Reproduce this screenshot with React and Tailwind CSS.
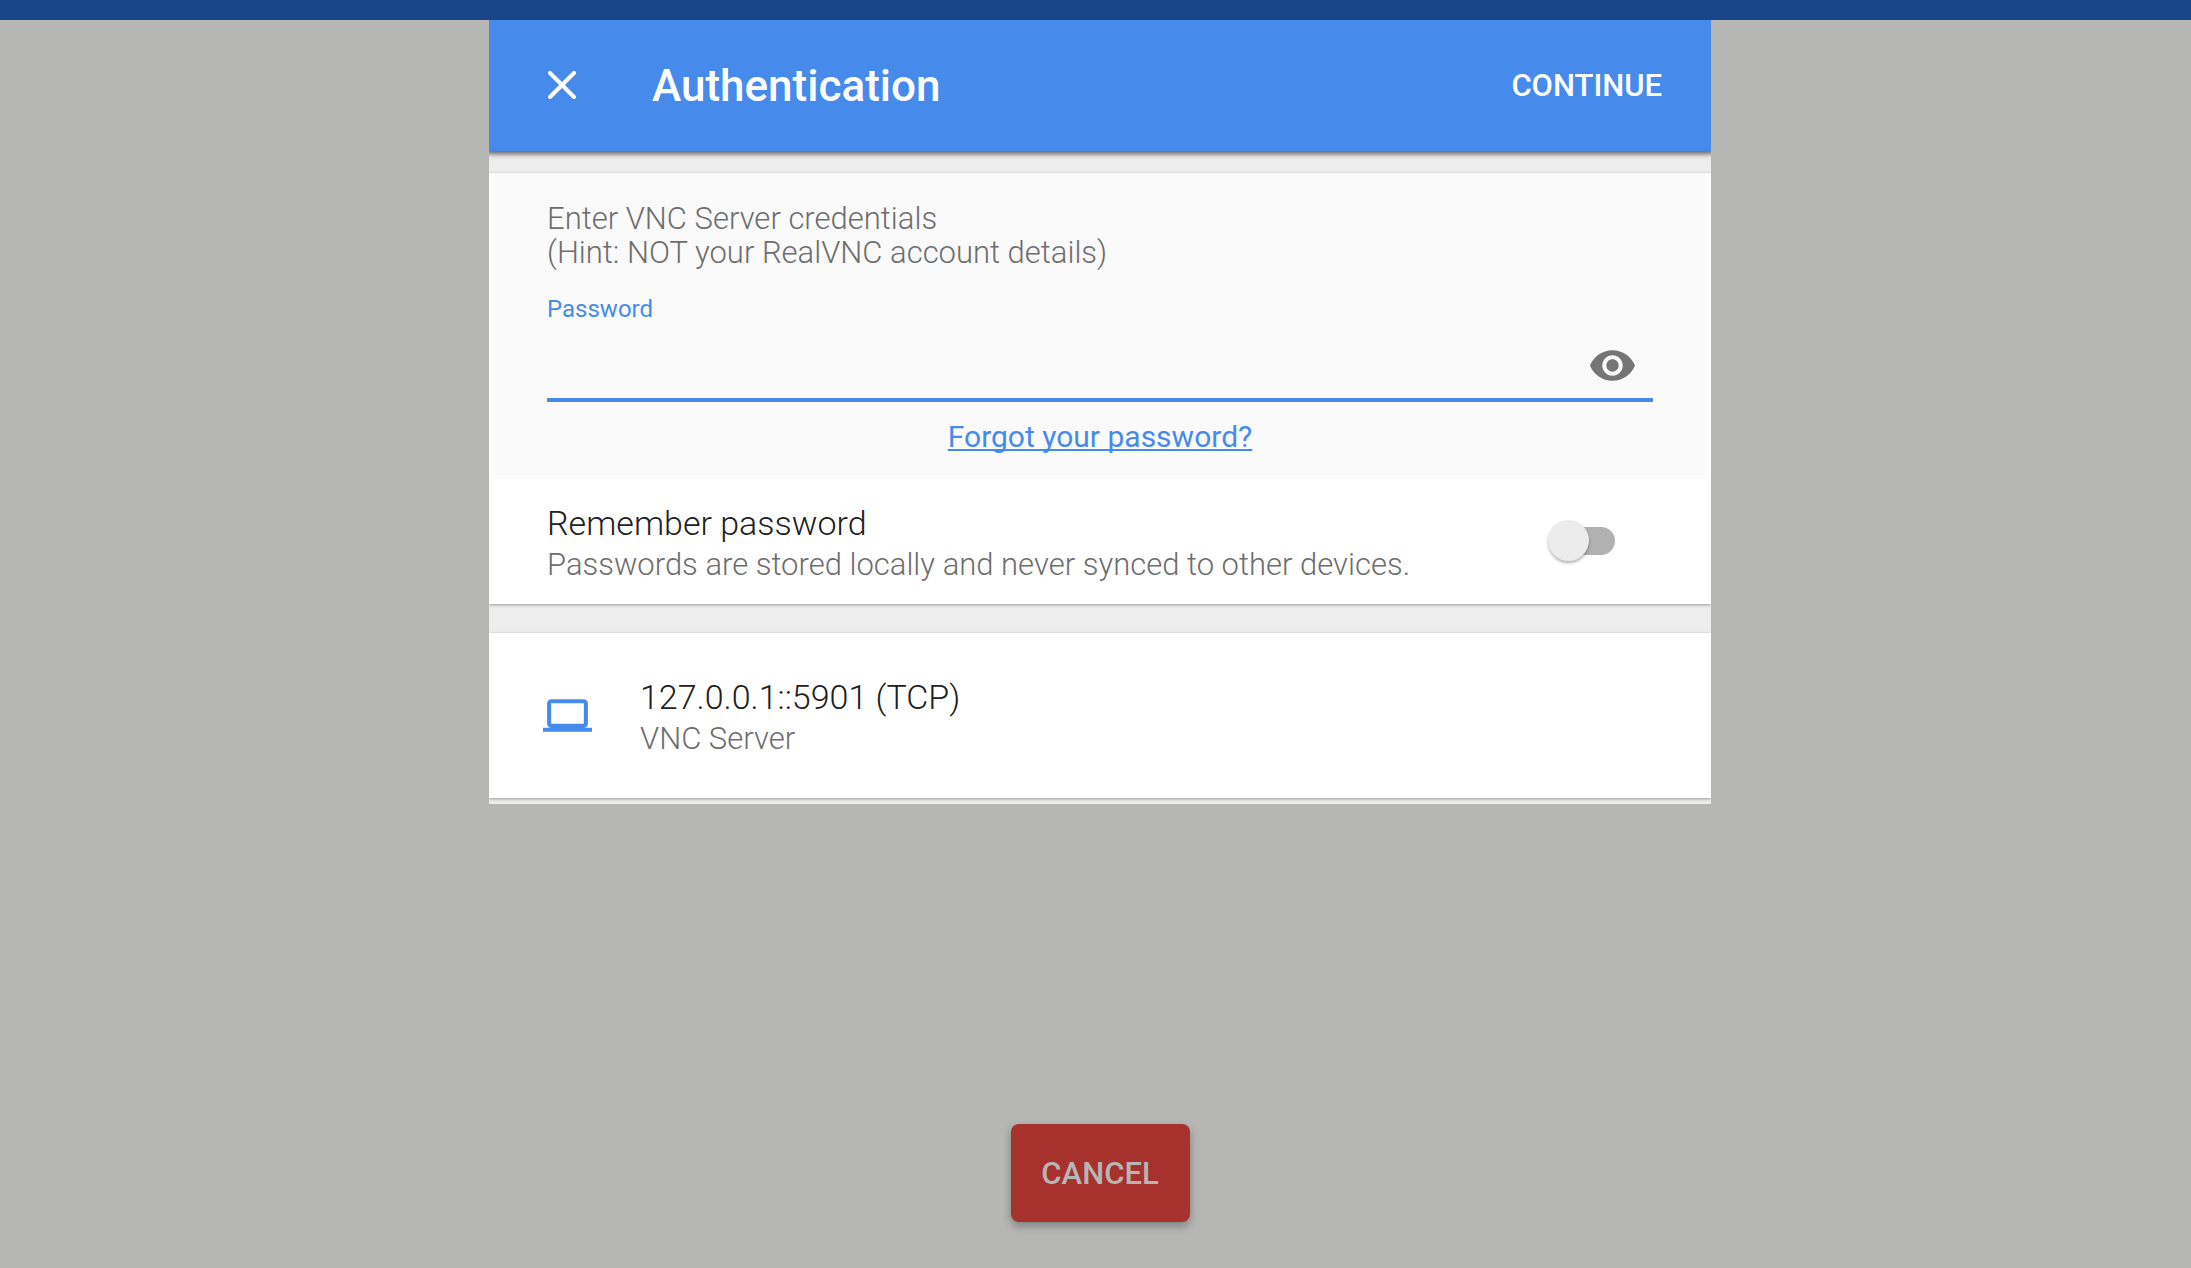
import { useState } from 'react';

// ---- VNC authentication dialog ----
function CloseIcon() {
  return (
    <svg viewBox="0 0 28 28" className="size-7" fill="none" stroke="currentColor" strokeWidth="4" strokeLinecap="round">
      <path d="M2 2 26 26M26 2 2 26" />
    </svg>
  );
}

function EyeIcon() {
  return (
    <svg viewBox="1 4.5 22 15" className="h-[31px] w-[45px]" fill="currentColor">
      <path d="M12 4.5C7 4.5 2.73 7.61 1 12c1.73 4.39 6 7.5 11 7.5s9.27-3.11 11-7.5c-1.73-4.39-6-7.5-11-7.5zM12 17c-2.76 0-5-2.24-5-5s2.24-5 5-5 5 2.24 5 5-2.24 5-5 5zm0-8c-1.66 0-3 1.34-3 3s1.34 3 3 3 3-1.34 3-3-1.34-3-3-3z" />
    </svg>
  );
}

function LaptopIcon() {
  return (
    <svg viewBox="0 4 24 16" className="h-[33px] w-[49px]" fill="currentColor">
      <path d="M20 18c1.1 0 1.99-.9 1.99-2L22 6c0-1.1-.9-2-2-2H4c-1.1 0-2 .9-2 2v10c0 1.1.9 2 2 2H0v2h24v-2h-4zM4 6h16v10H4V6z" />
    </svg>
  );
}

function TopBar() {
  return (
    <header className="flex h-[131px] items-center bg-[#468bec] pr-[49px] pb-px pl-[59px] text-white shadow-[0_1px_5px_2px_rgba(0,0,0,0.6)]">
      <button type="button" aria-label="Close"><CloseIcon /></button>
      <h1 className="ml-[76px] flex-1 pt-0.5 text-[44px] font-medium leading-[52px]">Authentication</h1>
      <button type="button" className="pt-0.5 text-[31px] font-medium">CONTINUE</button>
    </header>
  );
}

function Credentials() {
  const [shown, setShown] = useState(false);
  return (
    <div className="mx-[5px] bg-[#fafafa] px-[53px] pt-[29px] pb-6">
      <p className="text-[31px] leading-[34px] text-[#6e6e6e]">
        Enter VNC Server credentials<br />(Hint: NOT your RealVNC account details)
      </p>
      <label htmlFor="password" className="mt-[22px] block text-[24px] font-normal leading-[34px] text-[#468bec]">Password</label>
      <div className="flex h-[76px] items-center border-b-4 border-[#468bec] pt-1.5 pr-[18px]">
        <input id="password" type={shown ? 'text' : 'password'} className="min-w-0 flex-1 bg-transparent text-[31px] outline-none" />
        <button type="button" aria-label="Show password" className="text-[#757575]" onClick={() => setShown(!shown)}>
          <EyeIcon />
        </button>
      </div>
      <div className="mt-[17px] text-center text-[30px] font-normal leading-[36px]">
        <a href="#forgot" className="text-[#468bec] underline decoration-2 underline-offset-2 [text-decoration-skip-ink:none]">Forgot your password?</a>
      </div>
    </div>
  );
}

function RememberRow() {
  return (
    <div className="flex items-start justify-between pt-[23px] pr-[96px] pb-[19px] pl-[58px]">
      <label htmlFor="remember">
        <span className="block text-[34px] leading-[43px] text-[#212121]">Remember password</span>
        <span className="block text-[31px] leading-[40px] text-[#6e6e6e]">Passwords are stored locally and never synced to other devices.</span>
      </label>
      <span className="relative mt-[18px] block h-[42px] w-[67px]">
        <input
          id="remember"
          type="checkbox"
          role="switch"
          className="peer absolute top-[7px] right-0 h-7 w-[60px] appearance-none rounded-full bg-[#b1b1b1] checked:bg-[#a3c5f6]"
        />
        <span className="pointer-events-none absolute top-0 left-0 size-[41px] rounded-full bg-[#ececec] shadow-[0_2px_3px_rgba(0,0,0,0.3)] peer-checked:left-[26px] peer-checked:bg-[#468bec]" />
      </span>
    </div>
  );
}

function ServerRow() {
  return (
    <section className="flex items-center bg-white pt-[43px] pb-[39px] pl-[54px] shadow-[0_1px_3px_rgba(0,0,0,0.35)]">
      <span className="pb-1 text-[#468bec]"><LaptopIcon /></span>
      <div className="ml-12">
        <div className="text-[34px] leading-[43px] text-[#212121]">127.0.0.1::5901 (TCP)</div>
        <div className="text-[31px] leading-[40px] text-[#6e6e6e]">VNC Server</div>
      </div>
    </section>
  );
}

export default function App() {
  return (
    <div className="flex min-h-screen flex-col bg-[#b6b6b4] font-['Roboto',sans-serif] font-light">
      <div className="h-5 bg-[#184587]" />
      <main className="flex flex-1 flex-col items-center justify-between pb-[46px] pl-[9px]">
        <div className="w-full max-w-[1222px] overflow-hidden bg-[#ededed] pb-1.5">
          <TopBar />
          <section className="mt-[22px] bg-white shadow-[0_1px_3px_rgba(0,0,0,0.35)]">
            <Credentials />
            <RememberRow />
          </section>
          <div className="h-[29px]" />
          <ServerRow />
        </div>
        <button type="button" className="h-[98px] w-[179px] rounded-lg bg-[#a7322d] pt-0.5 text-[31px] font-medium text-[#b6b6b4] shadow-[0_4px_8px_rgba(0,0,0,0.3)]">
          CANCEL
        </button>
      </main>
    </div>
  );
}
